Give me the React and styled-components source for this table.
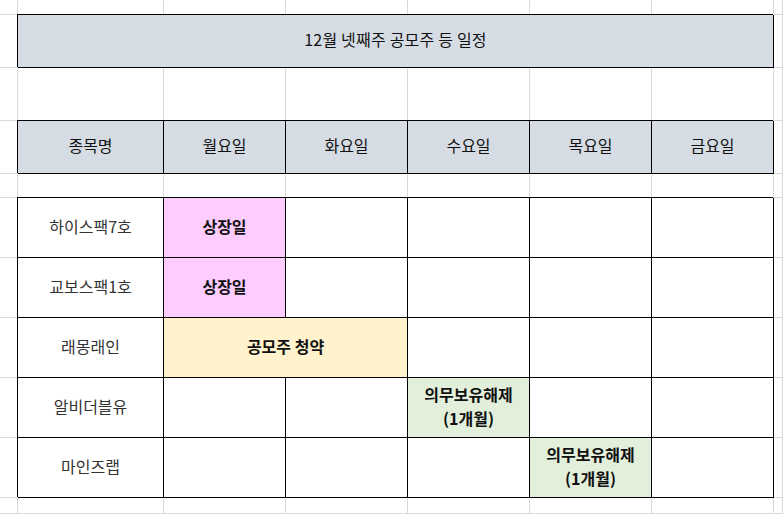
import React from "react";
import styled, { createGlobalStyle } from "styled-components";

const GlobalStyle = createGlobalStyle`
  html, body {
    margin: 0;
    padding: 0;
    background: #ffffff;
    overflow: hidden;
  }
  body {
    font-family: "Noto Sans CJK KR", "Noto Sans", sans-serif;
  }
`;

const GRID = "#d9d9d9";
const FILLS = {
  header: "#d6dce4",
  pink: "#ffccff",
  yellow: "#fff2cc",
  green: "#e2efda",
  none: "#ffffff",
};

const Sheet = styled.div`
  display: grid;
  grid-template-columns: 18px 146px repeat(5, 122px) 9px;
  grid-template-rows: 15px 53px 53px 53px 24px repeat(5, 60px) 16px;
  width: 783px;
  height: 514px;
  background: #ffffff;
`;

const Cell = styled.div`
  box-sizing: border-box;
  grid-column: span ${(p) => p.$span || 1};
  background: ${(p) => FILLS[p.$fill || "none"]};
  border-right: 1px solid ${(p) => (p.$boxed ? "#000" : GRID)};
  border-bottom: 1px solid ${(p) => (p.$boxed ? "#000" : GRID)};
  box-shadow: ${(p) => (p.$boxed ? "-1px -1px 0 0 #000" : "none")};
  display: flex;
  align-items: center;
  justify-content: center;
  text-align: center;
  font-size: 16px;
  line-height: 24px;
  color: ${(p) => (p.$muted ? "#333333" : "#111111")};
  font-weight: ${(p) => (p.$bold ? 700 : 400)};
  white-space: pre-line;
  padding-bottom: 4px;
`;

const Title = styled(Cell)`
  letter-spacing: 0.2px;
`;

const days = ["월요일", "화요일", "수요일", "목요일", "금요일"];

const rows = [
  { name: "하이스팩7호", cells: [{ text: "상장일", fill: "pink" }, {}, {}, {}, {}] },
  { name: "교보스팩1호", cells: [{ text: "상장일", fill: "pink" }, {}, {}, {}, {}] },
  { name: "래몽래인", cells: [{ text: "공모주 청약", fill: "yellow", span: 2 }, {}, {}, {}] },
  {
    name: "알비더블유",
    cells: [{}, {}, { text: "의무보유해제\n(1개월)", fill: "green" }, {}, {}],
  },
  {
    name: "마인즈랩",
    cells: [{}, {}, {}, { text: "의무보유해제\n(1개월)", fill: "green" }, {}],
  },
];

const EmptyRow = ({ id }) =>
  Array.from({ length: 8 }, (_, i) => <Cell key={`${id}-${i}`} />);

export default function App() {
  return (
    <>
      <GlobalStyle />
      <Sheet>
        <EmptyRow id="r0" />

        <Cell />
        <Title $span={6} $boxed $fill="header">
          12월 넷째주 공모주 등 일정
        </Title>
        <Cell />

        <EmptyRow id="r2" />

        <Cell />
        <Cell $boxed $fill="header">종목명</Cell>
        {days.map((d) => (
          <Cell key={d} $boxed $fill="header">
            {d}
          </Cell>
        ))}
        <Cell />

        <EmptyRow id="r4" />

        {rows.map((r) => (
          <React.Fragment key={r.name}>
            <Cell />
            <Cell $boxed $muted>
              {r.name}
            </Cell>
            {r.cells.map((c, i) => (
              <Cell
                key={i}
                $boxed
                $bold={!!c.text}
                $fill={c.fill}
                $span={c.span}
              >
                {c.text}
              </Cell>
            ))}
            <Cell />
          </React.Fragment>
        ))}

        <EmptyRow id="r10" />
      </Sheet>
    </>
  );
}
